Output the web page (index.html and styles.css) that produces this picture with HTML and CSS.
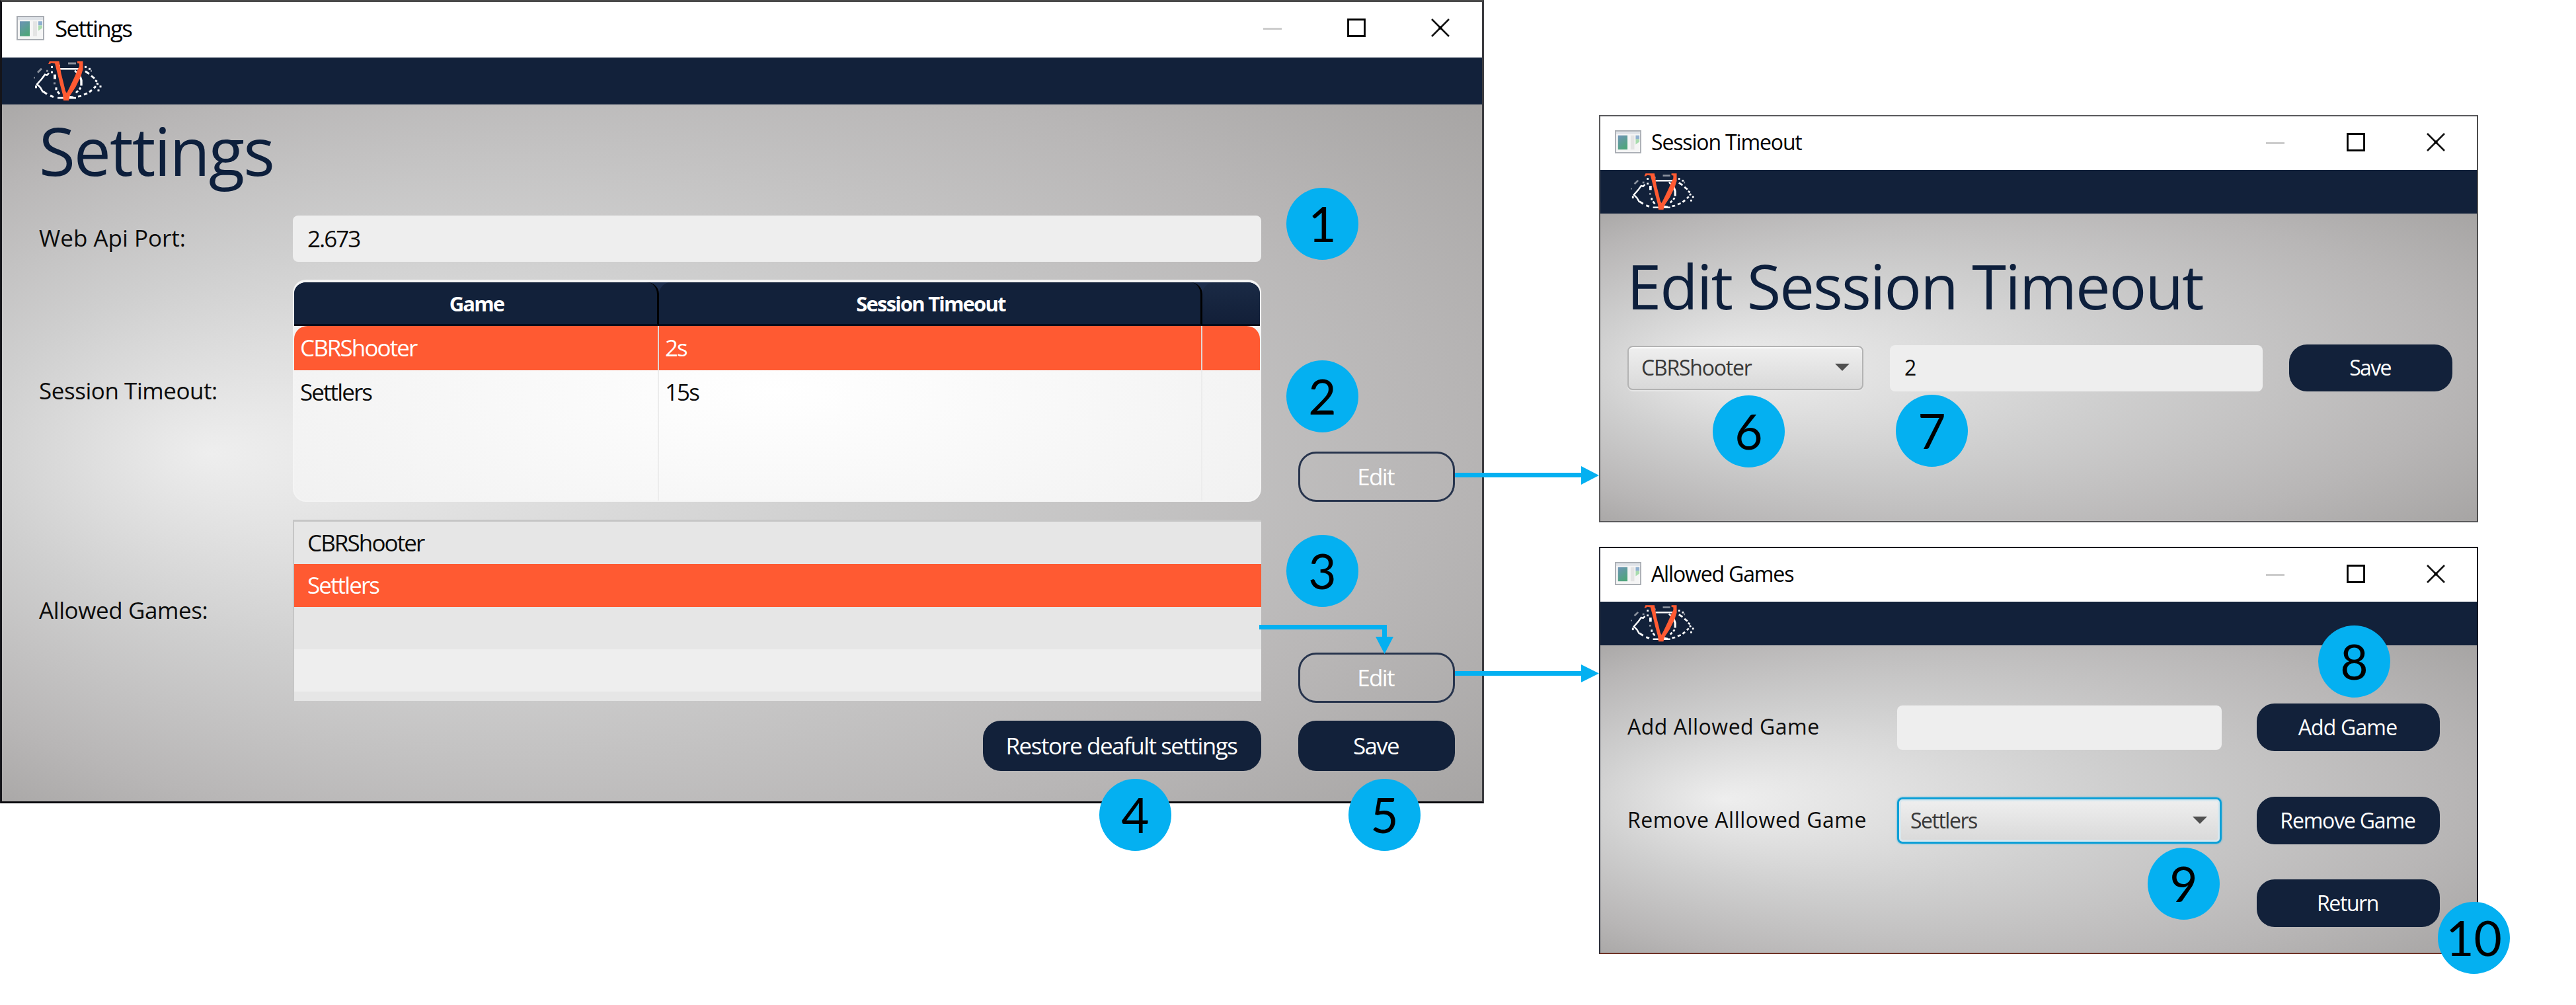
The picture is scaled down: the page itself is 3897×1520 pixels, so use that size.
FILE: index.html
```html
<!DOCTYPE html>
<html lang="en">
<head>
<meta charset="utf-8">
<title>Settings</title>
<link rel="stylesheet" href="styles.css">
</head>
<body>
<!-- Shared symbols -->
<svg class="defs" aria-hidden="true">
  <defs>
    <linearGradient id="app-pane" x1="0" y1="0" x2="0.5" y2="1">
      <stop offset="0" stop-color="#6e93b8"/><stop offset="1" stop-color="#4fa57c"/>
    </linearGradient>
    <radialGradient id="steel" cx="0.5" cy="0.5" r="0.75" fx="0.14" fy="0.5">
      <stop offset="0" stop-color="#eeeeee"/>
      <stop offset="0.4" stop-color="#cfcfcf"/>
      <stop offset="0.75" stop-color="#b8b6b6"/>
      <stop offset="1" stop-color="#a3a1a0"/>
    </radialGradient>
    <symbol id="app" viewBox="0 0 42 36" preserveAspectRatio="none">
      <rect x="1" y="1" width="40" height="34" fill="#f5f5f5" stroke="#a9adb3" stroke-width="2"/>
      <rect x="2" y="2" width="38" height="4" fill="#dfe3e8"/>
      <rect x="5" y="8" width="15" height="22" fill="url(#app-pane)"/>
      <rect x="25" y="8" width="6" height="22" fill="#e4e4e4"/>
      <rect x="33" y="8" width="6" height="6" fill="#8fb0cf"/>
      <path d="M33 14h6v4l-6 4z" fill="#a9dcae"/>
    </symbol>
    <symbol id="eye" viewBox="0 0 105 66" preserveAspectRatio="none">
      <g fill="none" stroke="#fff" stroke-width="2.6">
        <path d="M40 13.500H74M62 16l4 4M36 58h28M48 55l12 2"/>
        <path d="M23 20l-3 3-3-1-5 7-7 8 5 5 4 7"/>
        <path d="M14 48l6 4M25 54.500l5 2" stroke-width="3.200"/>
        <path d="M67 56l5-1M76 53l5-2M84 49l4-3M91 43l3-3M95 37l3-1M96 33l-3-2M92 28l-5-4M84 21l-6-4" stroke-width="3"/>
        <path d="M66 20l4 5 2 6v8" stroke-width="3.400"/>
        <path d="M71 42l-2 3M67 47l-3 3" stroke-width="3"/>
        <path d="M32 22v7" stroke-width="4"/>
        <path d="M34 42v4M36 48l3 4" stroke-width="3"/>
      </g>
      <g fill="#fff">
        <rect x="2" y="39" width="3" height="4"/><rect x="26" y="9" width="3" height="3"/>
        <rect x="77" y="9" width="3" height="3"/><rect x="26" y="17" width="3" height="3"/>
        <rect x="83" y="12" width="3" height="3"/><rect x="99.500" y="39" width="3" height="3"/>
        <rect x="96.500" y="45" width="3" height="3"/><rect x="37" y="7" width="3" height="3"/>
      </g>
      <g fill="#8b929e">
        <rect x="52" y="3.500" width="12" height="3"/><rect x="30" y="34" width="3" height="3"/>
        <rect x="0" y="26" width="2" height="2"/><rect x="19" y="15" width="3" height="3"/>
        <path d="M5 18l6-6 2 2-6 6z"/><rect x="86" y="15" width="2" height="3"/>
      </g>
      <path fill="#ff5a32" fill-rule="evenodd" d="M22 6l2-4.500h14.500l1 6 2 13 3.500 14 3 13 2 3 4-8 7-15 6-14 2-4V5l-3-.500V1.500h8.500V14l-3 10-8 17-9 14-1.500 7h-8l-1-9-4-15-3-13-3-12-2-8-5-1-3 2z"/>
    </symbol>
    <symbol id="ctl-min" viewBox="0 0 28 28"><path d="M0 15.500h28" stroke="#ccc" stroke-width="3"/></symbol>
    <symbol id="ctl-max" viewBox="0 0 28 28"><path d="M1.500 1.500h25v25h-25z" fill="none" stroke="#000" stroke-width="2.800"/></symbol>
    <symbol id="ctl-close" viewBox="0 0 28 28"><path d="M1 1l26 26M27 1L1 27" stroke="#111" stroke-width="2.600"/><circle cx="14" cy="14" r="2.600" fill="#000"/></symbol>
  </defs>
</svg>

<main class="canvas">
  <section class="window window-settings">
    <header class="titlebar">
      <svg class="app-icon"><use href="#app"/></svg>
      <span class="title">Settings</span>
      <span class="controls"><svg><use href="#ctl-min"/></svg><svg><use href="#ctl-max"/></svg><svg><use href="#ctl-close"/></svg></span>
    </header>
    <nav class="brand"><svg><use href="#eye"/></svg></nav>
    <div class="content">
      <svg class="backdrop"><rect width="100%" height="100%" fill="url(#steel)"/></svg>
      <h1>Settings</h1>
      <div class="form">
        <label class="label-port">Web Api Port:</label>
        <div class="input number">2.673</div>
        <span></span>

        <label class="label-timeout">Session Timeout:</label>
        <div class="table">
          <div class="tr head"><span>Game</span><span>Session Timeout</span><span></span></div>
          <div class="tr selected"><span>CBRShooter</span><span>2s</span><span></span></div>
          <div class="tr"><span>Settlers</span><span>15s</span><span></span></div>
          <div class="tr rest"><span></span><span></span><span></span></div>
        </div>
        <button class="btn outline">Edit</button>

        <label class="label-games">Allowed Games:</label>
        <ul class="list">
          <li>CBRShooter</li><li class="selected">Settlers</li><li></li><li class="even"></li><li></li>
        </ul>
        <button class="btn outline">Edit</button>

        <span></span>
        <button class="btn restore">Restore deafult settings</button>
        <button class="btn save">Save</button>
      </div>
    </div>
  </section>

  <section class="window window-timeout">
    <header class="titlebar">
      <svg class="app-icon"><use href="#app"/></svg>
      <span class="title">Session Timeout</span>
      <span class="controls"><svg><use href="#ctl-min"/></svg><svg><use href="#ctl-max"/></svg><svg><use href="#ctl-close"/></svg></span>
    </header>
    <nav class="brand"><svg><use href="#eye"/></svg></nav>
    <div class="content">
      <svg class="backdrop"><rect width="100%" height="100%" fill="url(#steel)"/></svg>
      <h1>Edit Session Timeout</h1>
      <div class="row">
        <div class="combo"><span>CBRShooter</span><i></i></div>
        <div class="input">2</div>
        <button class="btn save">Save</button>
      </div>
    </div>
  </section>

  <section class="window window-games">
    <header class="titlebar">
      <svg class="app-icon"><use href="#app"/></svg>
      <span class="title">Allowed Games</span>
      <span class="controls"><svg><use href="#ctl-min"/></svg><svg><use href="#ctl-max"/></svg><svg><use href="#ctl-close"/></svg></span>
    </header>
    <nav class="brand"><svg><use href="#eye"/></svg></nav>
    <div class="content">
      <svg class="backdrop"><rect width="100%" height="100%" fill="url(#steel)"/></svg>
      <div class="form">
        <label>Add Allowed Game</label>
        <div class="input"></div>
        <button class="btn add">Add Game</button>
        <label>Remove Alllowed Game</label>
        <div class="combo focused"><span>Settlers</span><i></i></div>
        <button class="btn remove">Remove Game</button>
        <button class="btn return">Return</button>
      </div>
    </div>
  </section>

  <svg class="arrows" viewBox="0 0 3897 1520">
    <g fill="#04b0f1">
      <path d="M2201 715h191v-10l27 14-27 14v-11h-191z"/>
      <path d="M2201 1015h191v-10l27 13.500-27 13.500v-10h-191z"/>
      <path d="M1905 945h193v18h10l-13.500 26-13.500-26h10v-11h-186z"/>
    </g>
  </svg>

  <b class="badge b1">1</b><b class="badge b2">2</b><b class="badge b3">3</b><b class="badge b4">4</b><b class="badge b5">5</b>
  <b class="badge b6">6</b><b class="badge b7">7</b><b class="badge b8">8</b><b class="badge b9">9</b><b class="badge b10">10</b>
</main>
</body>
</html>
```
FILE: styles.css
```css
* { box-sizing: border-box; }
body { margin: 0; background: #fff; font-family: "Open Sans", "Noto Sans", sans-serif; color: #0c0c0c; }
.defs { position: absolute; width: 0; height: 0; }
.canvas { position: relative; width: 3897px; height: 1520px; overflow: hidden; }

/* Windows */
.window { position: absolute; display: flex; flex-direction: column; border: 2px solid #5a5a5c; font-size: 32px; }
.window-settings { left: 0; top: 0; width: 2245px; height: 1215px; border-color: #4a4a4a #3c3c40 #08080c #15151a; border-width: 3px; font-size: 35px; }
.window-timeout { left: 2419px; top: 174px; width: 1330px; height: 616px; border-right-color: #4c4c4c; }
.window-games { left: 2419px; top: 827px; width: 1330px; height: 616px; border-color: #0e1420 #0e1420 #6f3226 #2c303c; }

.titlebar { display: flex; align-items: center; flex: none; height: 81px; padding: 0 48px 4px 22px; background: #fff; color: #000; }
.window-settings .titlebar { height: 84px; padding: 0 49px 6px 22px; }
.app-icon { width: 40px; height: 35px; margin-right: 15px; }
.window-settings .app-icon { width: 42px; height: 37px; margin-right: 16px; }
.title { letter-spacing: -1.150px; padding-bottom: 0; }
.window-settings .title { letter-spacing: -1.700px; padding-bottom: 0; }
.controls { display: flex; gap: 93.500px; margin-left: auto; }
.controls svg { width: 28px; height: 28px; }
.window-settings .controls { gap: 99px; }

.brand { flex: none; height: 66px; padding: 4px 0 0 46px; background: #12213a; }
.brand svg { display: block; width: 98px; height: 60px; }
.window-settings .brand { height: 71px; padding: 4px 0 0 48px; }
.window-settings .brand svg { width: 105px; height: 65px; }

.content { position: relative; z-index: 0; flex: 1; padding: 0 41px; }
.backdrop { position: absolute; inset: 0; width: 100%; height: 100%; z-index: -1; }
h1 { margin: 0; font-weight: 380; color: #0d1f3c; white-space: nowrap; }
.window-settings .content { padding: 0 41px 0 56px; }
.window-settings h1 { font-size: 100px; line-height: 138px; margin-bottom: 30px; letter-spacing: -2px; }
.window-timeout h1 { font-size: 94px; line-height: 141px; margin: 0 0 18px; padding-top: 39px; letter-spacing: -1.950px; text-indent: -1px; }

/* Controls */
label { padding-bottom: 3px; white-space: nowrap; }
.input { display: flex; align-items: center; height: 70px; padding: 0 22px 2px; background: #eee; border-radius: 8px; }
.number { letter-spacing: -2px; }
.btn { height: 71px; padding: 0 2px 2px 0; border: 0; border-radius: 27px; background: #12213a; color: #fff; font: inherit; text-align: center; white-space: nowrap; }
.btn.outline { align-self: end; background: transparent; border: 3.500px solid #27344d; letter-spacing: -1.700px; padding: 0 3px 2px 0; }
.restore { justify-self: end; width: 421px; letter-spacing: -1.500px; }
.save { letter-spacing: -1.700px; }

.combo { display: flex; align-items: center; justify-content: space-between; height: 67px; padding: 0 19px 2px 19px; border: 2px solid #b3b3b3; border-radius: 8px; background: linear-gradient(#efefef, #d9d9d9); box-shadow: inset 0 2px 0 #fafafa, 0 2px 1px #e6e6e6; color: #383838; letter-spacing: -1.200px; }
.combo i { border: solid transparent; border-width: 11px 11px 0; border-top-color: #505050; }
.combo.focused { height: 70px; border: 3px solid #0c9fd6; box-shadow: 0 0 3px #46b4dd, inset 0 0 0 3px #d8e8ef; letter-spacing: -1.500px; padding-left: 17px; }

/* Settings form */
.window-settings .form { display: grid; grid-template-columns: 384px 1465px 56px 237px; grid-template-rows: 70px 336px 277px 76px; row-gap: 27px; align-items: center; }
.window-settings .form > :nth-child(3n) { grid-column: 4; }
.window-settings .form > :nth-child(3n+1) { grid-column: 1; }
.window-settings .form .btn { height: 76px; }
.label-timeout { letter-spacing: -.450px; padding-bottom: 1px; }
.label-games { letter-spacing: -.400px; padding-bottom: 4px; }

.table { align-self: stretch; display: flex; flex-direction: column; overflow: hidden; border: 2px solid #f4f4f4; border-top-width: 4px; border-radius: 20px; background: radial-gradient(ellipse 60% 90% at 50% 50%, #fff, #f1f1f1); }
.tr { display: grid; grid-template-columns: 552px 822px 1fr; height: 67px; }
.tr span { display: flex; align-items: center; padding: 0 0 2px 9px; border-right: 2px solid #ececec; letter-spacing: -1.900px; }
.tr span:last-child { border-right: 0; }
.tr.head { height: 66px; background: #1c2d4c; color: #fff; font-size: 31px; font-weight: 700; }
.tr.head span { justify-content: center; padding: 0 0 0 3px; background: #12213a; border-right: 3px solid #000; border-bottom: 3px solid #050c1a; border-radius: 18px 18px 0 0; letter-spacing: -1.800px; }
.tr.head span:last-child { border-right: 0; background: linear-gradient(#1a2a45, #121f38); }
.tr.selected { color: #fff; background: #ff5a32; border-radius: 20px 20px 0 0; }
.tr.selected span { border-right-color: #e3d6d3; }
.tr.rest { flex: 1; }

.list { align-self: stretch; margin: 0; padding: 0; list-style: none; display: flex; flex-direction: column; height: 274px; border-top: 3px solid #c6c6c6; border-left: 2px solid #c6c6c6; overflow: hidden; }
.list li { flex: none; display: flex; align-items: center; height: 64.300px; padding: 0 0 1px 20px; background: #e6e6e6; letter-spacing: -1.900px; }
.list .even { background: #eee; }
.list .selected { background: #ff5a32; color: #fff; }

/* Session timeout dialog */
.row { display: grid; grid-template-columns: 357px 564px 247px; column-gap: 40px; align-items: center; }

/* Allowed games dialog */
.window-games .form { display: grid; grid-template-columns: 408px 491px 53px 277px; grid-template-rows: 72px 72px 72px; row-gap: 69px; align-items: center; padding-top: 88px; }
.window-games .btn { grid-column: 4; height: 72px; }
.window-games .input { height: 67px; }
.window-games label { letter-spacing: .500px; }
.add { letter-spacing: -.850px; }
.remove { letter-spacing: -1.200px; }
.return { letter-spacing: -1.400px; margin-top: -32px; }

/* Callouts */
.arrows { position: absolute; inset: 0; width: 3897px; height: 1520px; }
.badge { position: absolute; width: 109px; height: 109px; border-radius: 50%; background: #04b0f1; color: #000; font: 400 73px/109px Lato, sans-serif; text-align: center; }
.b1 { left: 1946px; top: 284px; }
.b2 { left: 1946px; top: 545px; }
.b3 { left: 1946px; top: 809px; }
.b4 { left: 1663px; top: 1178px; }
.b5 { left: 2040px; top: 1178px; }
.b6 { left: 2591px; top: 598px; }
.b7 { left: 2868px; top: 597px; }
.b8 { left: 3507px; top: 946px; }
.b9 { left: 3249px; top: 1282px; }
.b10 { left: 3688px; top: 1364px; }
```
